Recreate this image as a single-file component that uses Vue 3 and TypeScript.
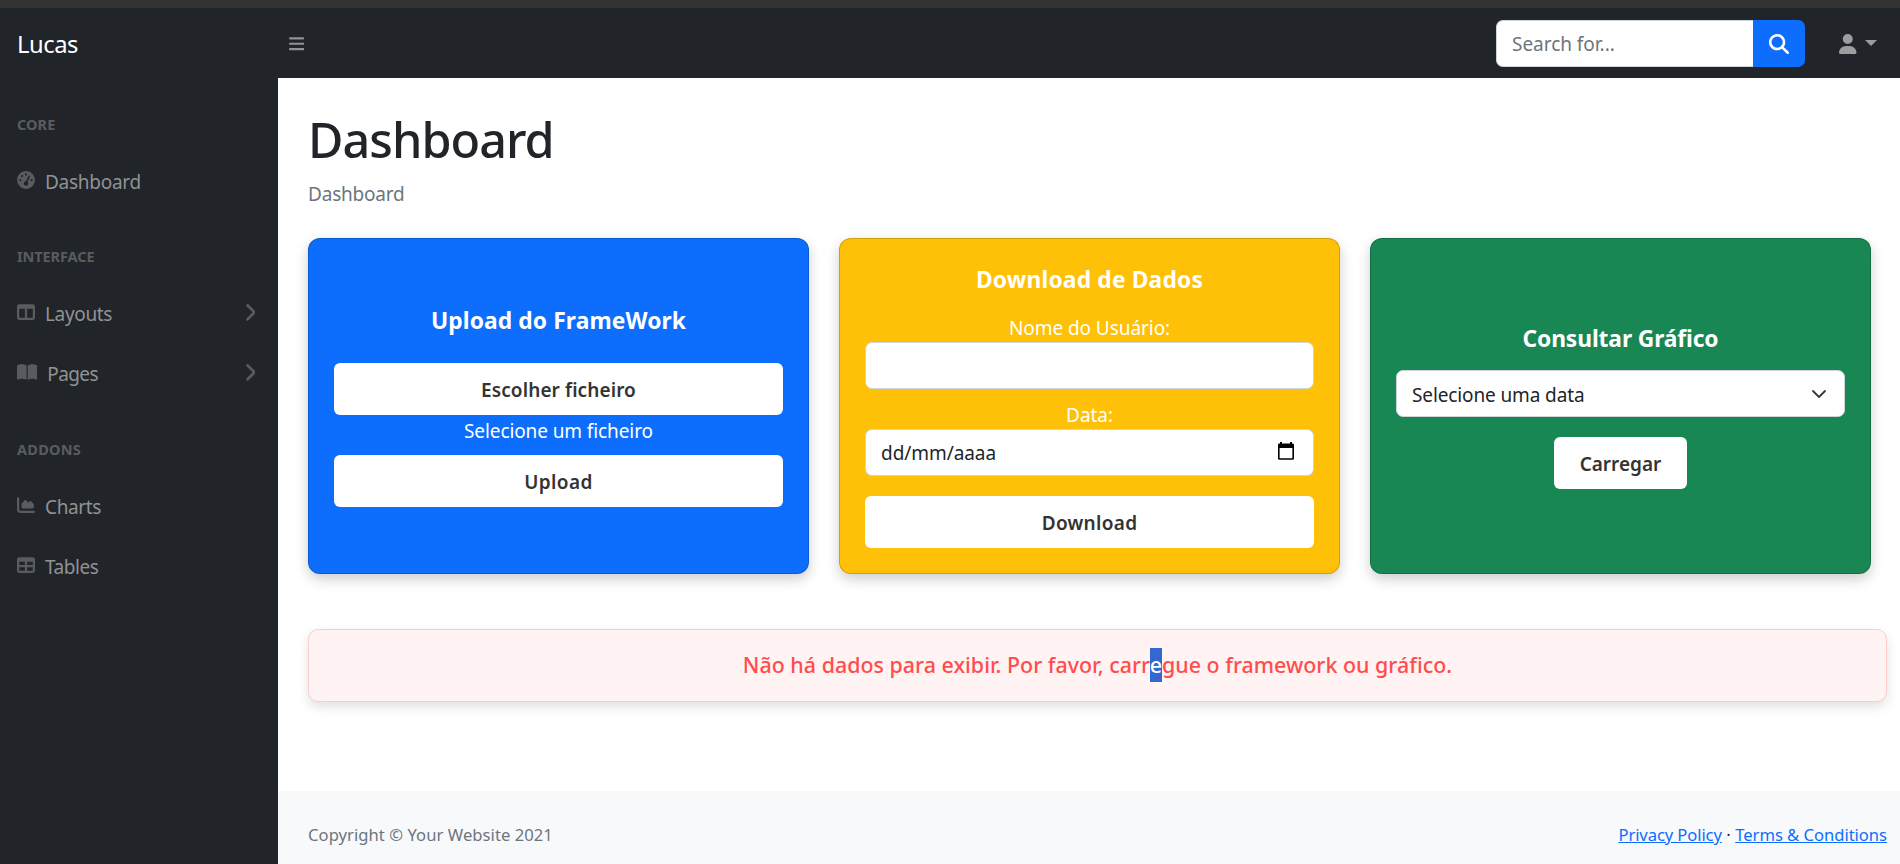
<script setup lang="ts">
import { ref } from 'vue'

interface NavItem {
  label: string
  cls: string
  viewBox: string
  path: string
  nested?: boolean
}
interface NavGroup {
  title: string
  cls: string
  items: NavItem[]
}

const groups: NavGroup[] = [
  {
    title: 'CORE',
    cls: 'core',
    items: [
      {
        label: 'Dashboard',
        cls: 'dash',
        viewBox: '0 0 512 512',
        path: 'M0 256a256 256 0 1 1 512 0A256 256 0 1 1 0 256zM288 96a32 32 0 1 0 -64 0 32 32 0 1 0 64 0zM256 416c35.3 0 64-28.7 64-64c0-17.4-6.9-33.1-18.1-44.6L366 161.7c5.3-12.1-.2-26.3-12.3-31.6s-26.3 .2-31.6 12.3L257.9 288c-.6 0-1.3 0-1.9 0c-35.3 0-64 28.7-64 64s28.7 64 64 64zM176 144a32 32 0 1 0 -64 0 32 32 0 1 0 64 0zM96 288a32 32 0 1 0 0-64 32 32 0 1 0 0 64zm352-32a32 32 0 1 0 -64 0 32 32 0 1 0 64 0z',
      },
    ],
  },
  {
    title: 'INTERFACE',
    cls: 'interface',
    items: [
      {
        label: 'Layouts',
        cls: 'layouts',
        viewBox: '0 0 512 512',
        path: 'M0 96C0 60.7 28.7 32 64 32H448c35.3 0 64 28.7 64 64V416c0 35.3-28.7 64-64 64H64c-35.3 0-64-28.7-64-64V96zm64 64V416H224V160H64zm384 0H288V416H448V160z',
        nested: true,
      },
      {
        label: 'Pages',
        cls: 'pages',
        viewBox: '0 0 576 512',
        path: 'M249.6 471.5c10.8 3.8 22.4-4.1 22.4-15.5V78.6c0-4.2-1.6-8.4-5-11C247.4 52 202.4 32 144 32C93.5 32 46.3 45.3 18.1 56.1C6.8 60.5 0 71.7 0 83.8V454.1c0 11.9 12.8 20.2 24.1 16.5C55.6 460.1 105.5 448 144 448c33.9 0 79 14 105.6 23.5zm76.8 0C353 462 398.1 448 432 448c38.5 0 88.4 12.1 119.9 22.6c11.3 3.8 24.1-4.6 24.1-16.5V83.8c0-12.1-6.8-23.3-18.1-27.6C529.7 45.3 482.5 32 432 32c-58.4 0-103.4 20-123 35.6c-3.3 2.6-5 6.8-5 11V456c0 11.4 11.7 19.3 22.4 15.5z',
        nested: true,
      },
    ],
  },
  {
    title: 'ADDONS',
    cls: 'addons',
    items: [
      {
        label: 'Charts',
        cls: 'charts',
        viewBox: '0 0 512 512',
        path: 'M64 64c0-17.7-14.3-32-32-32S0 46.3 0 64V400c0 44.2 35.8 80 80 80H480c17.7 0 32-14.3 32-32s-14.3-32-32-32H80c-8.8 0-16-7.2-16-16V64zm96 288H448c17.7 0 32-14.3 32-32V251.8c0-7.6-2.7-15-7.7-20.8l-65.8-76.8c-12.1-14.2-33.7-15-46.9-1.8l-21 21c-10 10-26.4 9.2-35.4-1.6l-39.2-47c-12.6-15.1-35.7-15.4-48.7-.6L135.9 215c-5.1 5.8-7.9 13.3-7.9 21.1v84c0 17.7 14.3 32 32 32z',
      },
      {
        label: 'Tables',
        cls: 'tables',
        viewBox: '0 0 512 512',
        path: 'M64 256V160H224v96H64zm0 64H224v96H64V320zm224 96V320H448v96H288zM448 256H288V160H448v96zM64 32C28.7 32 0 60.7 0 96V416c0 35.3 28.7 64 64 64H448c35.3 0 64-28.7 64-64V96c0-35.3-28.7-64-64-64H64z',
      },
    ],
  },
]

const search = ref('')
const userName = ref('')
</script>

<template>
  <div class="page">
    <div class="strip"></div>
    <header class="topbar">
      <a class="brand">Lucas</a>
      <button class="toggle" aria-label="Menu">
        <svg viewBox="0 0 448 512"><path d="M0 96C0 78.3 14.3 64 32 64H416c17.7 0 32 14.3 32 32s-14.3 32-32 32H32C14.3 128 0 113.7 0 96zM0 256c0-17.7 14.3-32 32-32H416c17.7 0 32 14.3 32 32s-14.3 32-32 32H32c-17.7 0-32-14.3-32-32zM448 416c0 17.7-14.3 32-32 32H32c-17.7 0-32-14.3-32-32s14.3-32 32-32H416c17.7 0 32 14.3 32 32z" /></svg>
      </button>
      <form class="search" @submit.prevent>
        <input v-model="search" type="text" placeholder="Search for..." />
        <button aria-label="Search">
          <svg viewBox="0 0 512 512"><path d="M416 208c0 45.9-14.9 88.3-40 122.7L502.6 457.4c12.5 12.5 12.5 32.8 0 45.3s-32.8 12.5-45.3 0L330.7 376c-34.4 25.2-76.8 40-122.7 40C93.1 416 0 322.9 0 208S93.1 0 208 0S416 93.1 416 208zM208 352a144 144 0 1 0 0-288 144 144 0 1 0 0 288z" /></svg>
        </button>
      </form>
      <a class="user">
        <svg viewBox="0 0 448 512"><path d="M224 256A128 128 0 1 0 224 0a128 128 0 1 0 0 256zm-45.7 48C79.8 304 0 383.8 0 482.3C0 498.7 13.3 512 29.7 512H418.3c16.4 0 29.7-13.3 29.7-29.7C448 383.8 368.2 304 269.7 304H178.3z" /></svg>
        <span class="caret"></span>
      </a>
    </header>

    <div class="body">
      <nav class="sidebar">
        <template v-for="g in groups" :key="g.title">
          <div class="heading" :class="g.cls">{{ g.title }}</div>
          <a v-for="n in g.items" :key="n.label" class="link" :class="n.cls">
            <svg class="icon" :viewBox="n.viewBox"><path :d="n.path" /></svg>
            <span class="label">{{ n.label }}</span>
            <svg v-if="n.nested" class="chevron" viewBox="0 0 320 512"><path d="M310.6 233.4c12.5 12.5 12.5 32.8 0 45.3l-192 192c-12.5 12.5-32.8 12.5-45.3 0s-12.5-32.8 0-45.3L242.7 256 73.4 86.6c-12.5-12.5-12.5-32.8 0-45.3s32.8-12.5 45.3 0l192 192z" /></svg>
          </a>
        </template>
      </nav>

      <div class="content">
        <main>
          <h1>Dashboard</h1>
          <div class="breadcrumb">Dashboard</div>

          <div class="cards">
            <section class="card blue">
              <h5 class="t-upload">Upload do FrameWork</h5>
              <button class="btn b-choose">Escolher ficheiro</button>
              <div class="hint">Selecione um ficheiro</div>
              <button class="btn b-upload">Upload</button>
            </section>

            <section class="card yellow">
              <h5 class="t-download">Download de Dados</h5>
              <label class="field">
                <span class="caption">Nome do Usuário:</span>
                <input v-model="userName" class="control" type="text" />
              </label>
              <div class="field">
                <span class="caption">Data:</span>
                <div class="control">
                  <span class="date">dd/mm/aaaa</span>
                  <svg class="calendar" viewBox="0 0 16 18"><path d="M2 1.6V0h2v1.6h8V0h2v1.6h.6A1.4 1.4 0 0 1 16 3v13.4a1.4 1.4 0 0 1-1.4 1.4H1.4A1.4 1.4 0 0 1 0 16.4V3a1.4 1.4 0 0 1 1.4-1.4zM1.6 6v10.2h12.8V6z" fill-rule="evenodd" /></svg>
                </div>
              </div>
              <button class="btn b-download">Download</button>
            </section>

            <section class="card green">
              <h5 class="t-chart">Consultar Gráfico</h5>
              <div class="control select">
                <span>Selecione uma data</span>
                <svg class="arrow" viewBox="0 0 16 16"><path d="m2 5 6 6 6-6" /></svg>
              </div>
              <button class="btn b-load">Carregar</button>
            </section>
          </div>

          <div class="alert">
            <p>Não há dados para exibir. Por favor, carr<mark>e</mark>gue o framework ou gráfico.</p>
          </div>
        </main>

        <footer>
          <div class="copy">Copyright © Your Website 2021</div>
          <div class="legal"><a class="privacy">Privacy Policy</a><span class="dot">·</span><a>Terms &amp; Conditions</a></div>
        </footer>
      </div>
    </div>
  </div>
</template>

<style>
body {
  margin: 0;
  overflow: hidden;
}
</style>

<style scoped>
* {
  box-sizing: border-box;
}
.page {
  height: 864px;
  display: flex;
  flex-direction: column;
  font-family: 'Noto Sans', 'Open Sans', sans-serif;
  font-size: 19px;
  line-height: 30px;
  color: #212529;
  background: #fff;
}
button,
input {
  font: inherit;
  color: inherit;
  border: 0;
  padding: 0;
  margin: 0;
}
svg {
  display: block;
  flex: none;
  fill: currentColor;
}
.strip {
  height: 8px;
  background: #333;
}
.topbar {
  height: 70px;
  display: flex;
  align-items: center;
  padding: 0 23px 0 17px;
  background: #212529;
}
.brand {
  width: 272px;
  padding-top: 1px;
  color: #fff;
  font-size: 23.75px;
  letter-spacing: -0.46px;
}
.toggle {
  background: none;
  color: #909294;
  padding-top: 2px;
}
.toggle svg {
  width: 15.3px;
  height: 17.5px;
}
.search {
  margin-left: auto;
  display: flex;
  height: 47px;
}
.search input {
  width: 257px;
  border: 1px solid #ced4da;
  border-right: 0;
  border-radius: 7px 0 0 7px;
  padding: 2px 15px 0;
  background: #fff;
  outline: none;
}
.search input::placeholder {
  color: #6c757d;
  opacity: 1;
  letter-spacing: -0.03px;
}
.search button {
  width: 52px;
  display: flex;
  align-items: center;
  justify-content: center;
  padding-top: 1px;
  border-radius: 0 7px 7px 0;
  background: #0d6efd;
  color: #fff;
}
.search button svg {
  width: 20px;
  height: 20px;
}
.user {
  display: flex;
  align-items: center;
  margin-left: 34px;
  color: #9b9d9f;
}
.user svg {
  width: 17.5px;
  height: 20px;
  margin-top: 2px;
}
.caret {
  margin-left: 8.5px;
  border-top: 6px solid;
  border-left: 6px solid transparent;
  border-right: 6px solid transparent;
}
.body {
  flex: 1;
  display: flex;
  min-height: 0;
}
.sidebar {
  width: 278px;
  background: #212529;
  flex: none;
}
.heading {
  height: 72.5px;
  padding: 34.5px 17px 0;
  font-size: 14.5px;
  font-weight: 700;
  line-height: 22px;
  color: #595c5f;
}
.core {
  letter-spacing: 0.05px;
}
.interface {
  letter-spacing: -0.08px;
}
.addons {
  letter-spacing: 0.25px;
}
.link {
  height: 60px;
  display: flex;
  align-items: center;
  padding: 0 22.6px 0 17px;
  color: #909294;
}
.icon {
  height: 18px;
  width: 18px;
  margin: 0 10px 1.5px 0;
  color: #595c5f;
}
.pages .icon {
  width: 20.25px;
}
.label {
  padding-top: 2px;
}
.chevron {
  width: 11.7px;
  height: 18.7px;
  margin: 0 0 1.5px auto;
  color: #595c5f;
  stroke: currentColor;
  stroke-width: 14;
}
.dash {
  letter-spacing: -0.27px;
}
.layouts,
.charts {
  letter-spacing: -0.35px;
}
.pages {
  letter-spacing: -0.6px;
}
.tables {
  letter-spacing: -0.46px;
}
.content {
  flex: 1;
  display: flex;
  flex-direction: column;
}
main {
  flex: 1;
  padding: 31px 13px 0 30px;
}
h1 {
  margin: 0 0 10px;
  font-size: 48.5px;
  line-height: 60px;
  font-weight: 500;
  letter-spacing: -0.95px;
}
.breadcrumb {
  color: #6c757d;
  letter-spacing: -0.2px;
}
.cards {
  display: grid;
  grid-template-columns: repeat(3, 1fr);
  gap: 30px;
  margin: 29px 16px 55px 0;
}
.card {
  height: 336px;
  display: flex;
  flex-direction: column;
  align-items: center;
  justify-content: center;
  padding: 0 25px;
  border: 1px solid rgba(0, 0, 0, 0.175);
  border-radius: 12px;
  box-shadow: 0 5px 13px rgba(0, 0, 0, 0.2);
  color: #fff;
}
.blue {
  background: #0d6efd;
}
.yellow {
  background: #ffc107;
}
.green {
  background: #198754;
}
h5 {
  margin: 0;
  padding-top: 1px;
  font-size: 22.8px;
  line-height: 30px;
  font-weight: 700;
}
.t-upload {
  margin-bottom: 27px;
  letter-spacing: 0.1px;
}
.t-download {
  margin-bottom: 17px;
  letter-spacing: 0.17px;
}
.t-chart {
  margin-bottom: 16px;
  letter-spacing: -0.12px;
}
.btn {
  flex: none;
  width: 100%;
  height: 52px;
  padding-top: 2px;
  border-radius: 6px;
  background: #fff;
  color: #333;
  font-weight: 600;
}
.b-choose {
  letter-spacing: 0.1px;
}
.b-upload {
  letter-spacing: 0.4px;
}
.b-download {
  margin-top: 10px;
  letter-spacing: 0.3px;
}
.b-load {
  width: 133px;
  margin-top: 20px;
}
.hint {
  padding-top: 1px;
  margin-bottom: 9px;
  letter-spacing: -0.1px;
}
.field {
  width: 100%;
  display: flex;
  flex-direction: column;
  align-items: center;
  margin-bottom: 10px;
  letter-spacing: -0.06px;
}
.caption {
  height: 30px;
  padding-top: 1px;
}
.control {
  width: 100%;
  height: 47px;
  display: flex;
  align-items: center;
  justify-content: space-between;
  padding: 0 19px 0 15px;
  border: 1px solid #ced4da;
  border-radius: 7px;
  background: #fff;
  color: #212529;
  outline: none;
}
.calendar {
  width: 16px;
  height: 18px;
  margin-bottom: 3px;
  color: #000;
}
.select {
  letter-spacing: -0.12px;
  padding-right: 17px;
}
.select span {
  padding-top: 2px;
}
.arrow {
  width: 16px;
  height: 16px;
  fill: none;
  stroke: #343a40;
  stroke-width: 1.8;
  stroke-linecap: round;
  stroke-linejoin: round;
}
.alert {
  height: 73px;
  display: flex;
  align-items: center;
  justify-content: center;
  padding-bottom: 2px;
  border: 1px solid #ffcccc;
  border-radius: 10px;
  background: #fff3f3;
  box-shadow: 0 5px 12px rgba(0, 0, 0, 0.12);
}
.alert p {
  margin: 0;
  font-size: 21.4px;
  font-weight: 500;
  letter-spacing: 0.02px;
  color: #ff4d4d;
}
.alert mark {
  padding: 2px 0 3px;
  background: #3367d1;
  color: #fff;
}
footer {
  height: 73px;
  display: flex;
  justify-content: space-between;
  padding: 31px 13px 0 30px;
  font-size: 16.6px;
  line-height: 26px;
  background: #f8f9fb;
}
.copy {
  color: #6c757d;
  letter-spacing: 0.05px;
}
.legal {
  letter-spacing: -0.03px;
}
.legal a {
  color: #0d6efd;
  text-decoration: underline;
}
.legal .privacy {
  letter-spacing: -0.1px;
}
.dot {
  margin: 0 4.5px;
}
</style>
